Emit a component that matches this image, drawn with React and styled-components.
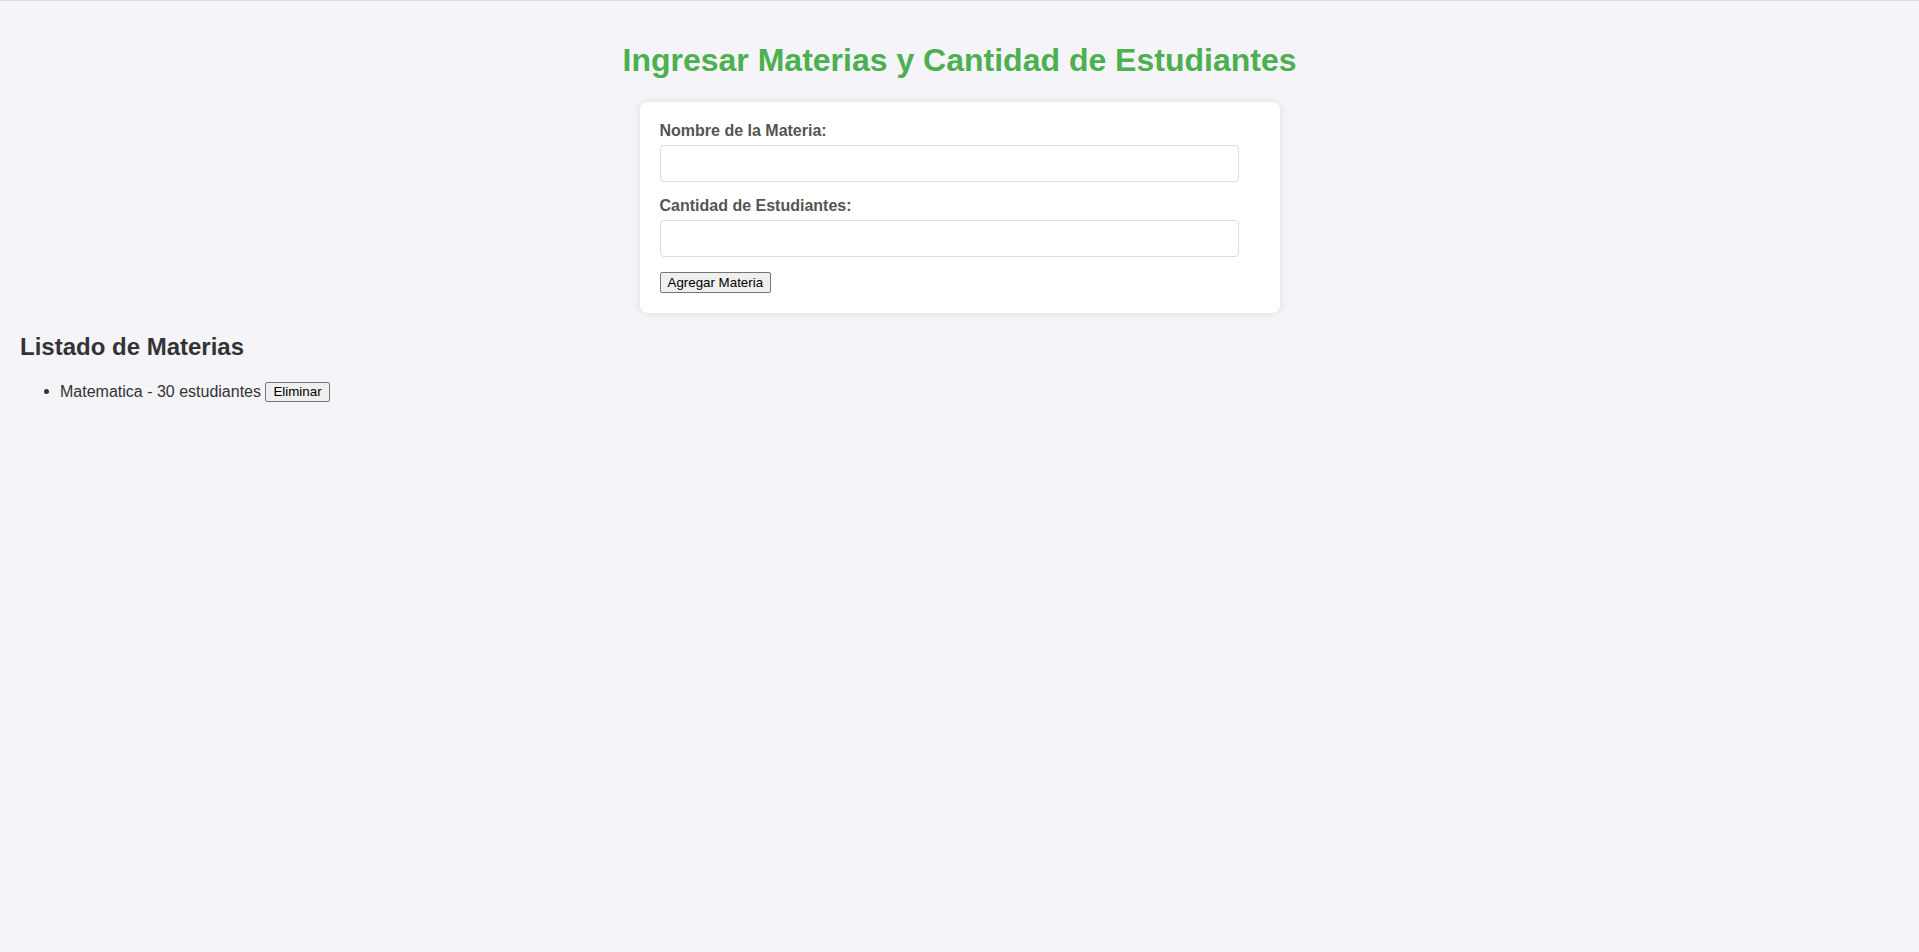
import React, { useState } from "react";
import styled, { createGlobalStyle } from "styled-components";

const GlobalStyle = createGlobalStyle`
  html, body {
    margin: 0;
    padding: 0;
  }
  body {
    background: #f4f4f9;
    font-family: "Liberation Sans", Arial, sans-serif;
    color: #333;
    border-top: 1px solid #dcdcdc;
    min-height: 951px;
  }
`;

const Page = styled.div`
  padding: 20px;
`;

const Title = styled.h1`
  font-size: 32px;
  font-weight: bold;
  color: #4caf50;
  text-align: center;
  margin: 21.44px 0 22.5px;
`;

const Card = styled.form`
  width: 600px;
  margin: 0 auto;
  padding: 20px;
  background: #fff;
  border-radius: 8px;
  box-shadow: 0 0 10px rgba(0, 0, 0, 0.1);
`;

const Label = styled.label`
  display: block;
  font-size: 16px;
  font-weight: bold;
  color: #555;
`;

const Input = styled.input`
  display: block;
  box-sizing: border-box;
  width: 579px;
  height: 37px;
  padding: 10px;
  margin: 5px 0 15px;
  font-family: "Liberation Sans", Arial, sans-serif;
  font-size: 13.33px;
  border: 1px solid #ddd;
  border-radius: 4px;
  background: #fff;
  outline: none;
`;

const Button = styled.button`
  font-family: "Liberation Sans", Arial, sans-serif;
  font-size: 13.33px;
  color: #000;
  background: #efefef;
  border: 1px solid #767676;
  border-radius: 2px;
  padding: 1px 7px;
  height: ${(p) => p.$h || 21}px;
  line-height: normal;
  cursor: pointer;
`;

const Subtitle = styled.h2`
  font-size: 24px;
  font-weight: bold;
  color: #333;
  margin: 20px 0 21px;
`;

const List = styled.ul`
  margin: 0;
  padding-left: 40px;
  list-style: disc;
`;

const Item = styled.li`
  font-size: 16px;
  color: #333;
`;

export default function App() {
  const [materias, setMaterias] = useState([{ nombre: "Matematica", cantidad: 30 }]);
  const [nombre, setNombre] = useState("");
  const [cantidad, setCantidad] = useState("");

  const agregar = (e) => {
    e.preventDefault();
    if (!nombre || !cantidad) return;
    setMaterias([...materias, { nombre, cantidad }]);
    setNombre("");
    setCantidad("");
  };

  return (
    <>
      <GlobalStyle />
      <Page>
        <Title>Ingresar Materias y Cantidad de Estudiantes</Title>
        <Card onSubmit={agregar}>
          <Label htmlFor="nombre">Nombre de la Materia:</Label>
          <Input id="nombre" value={nombre} onChange={(e) => setNombre(e.target.value)} />
          <Label htmlFor="cantidad">Cantidad de Estudiantes:</Label>
          <Input
            id="cantidad"
            type="number"
            value={cantidad}
            onChange={(e) => setCantidad(e.target.value)}
          />
          <Button type="submit">Agregar Materia</Button>
        </Card>
        <Subtitle>Listado de Materias</Subtitle>
        <List>
          {materias.map((m, i) => (
            <Item key={i}>
              {m.nombre} - {m.cantidad} estudiantes{" "}
              <Button
                $h={20}
                type="button"
                onClick={() => setMaterias(materias.filter((_, j) => j !== i))}
              >
                Eliminar
              </Button>
            </Item>
          ))}
        </List>
      </Page>
    </>
  );
}
